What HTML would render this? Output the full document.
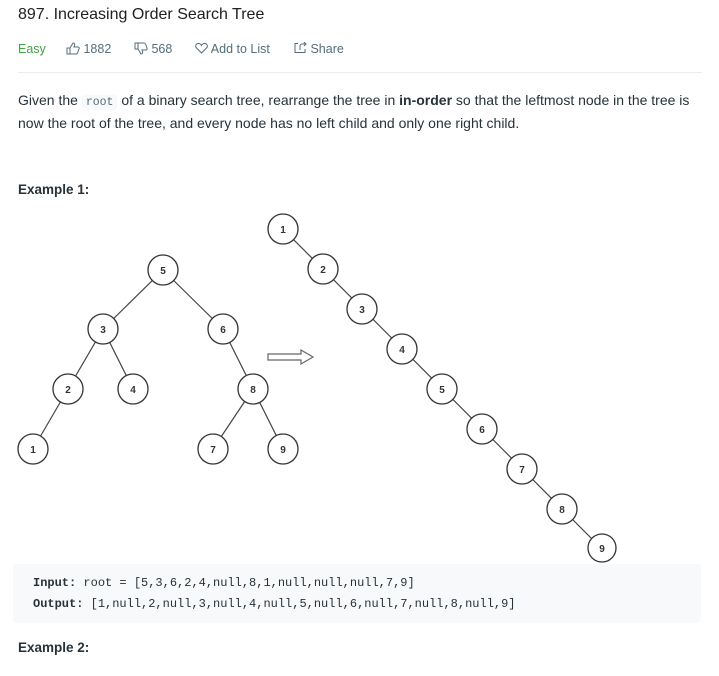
<!DOCTYPE html>
<html><head><meta charset="utf-8"><style>
body{margin:0;background:#fff;font-family:"Liberation Sans",sans-serif;color:#263238;width:719px;height:676px;overflow:hidden;position:relative}
.a{position:absolute}
.t{left:18px;top:6px;font-size:16px;font-weight:500;color:#212121}
.m{top:42px;font-size:12.5px;color:#546e7a}
.p{left:18px;top:90px;font-size:14px;line-height:21px;width:690px}
code{font-family:"Liberation Mono",monospace;font-size:11.5px;background:#f7f9fa;border-radius:3px;padding:1px 4px;color:#546e7a}
.h{left:18px;font-size:13.5px;font-weight:bold;color:#263238}
.pre{left:13px;top:564px;width:688px;height:59px;background:#f7f9fa;border-radius:3px;font-family:"Liberation Mono",monospace;font-size:12px;color:#263238}
</style></head><body>
<div class="a t">897. Increasing Order Search Tree</div>
<div class="a m" style="left:18px;color:#43a047;font-weight:500">Easy</div>
<div class="a m" style="left:66px">
<svg width="14" height="13" viewBox="0 0 14 13" style="vertical-align:-2px"><path d="M1 6h3v6H1zM4 6l3-5c1.5 0 2 1 1.5 2.5L8 5h4c1 0 1.5 1 1 2l-1.5 4c-.3.7-.8 1-1.5 1H4" fill="none" stroke="#546e7a"/></svg> 1882</div>
<div class="a m" style="left:134px">
<svg width="14" height="13" viewBox="0 0 14 13" style="vertical-align:-2px;transform:scaleY(-1)"><path d="M1 6h3v6H1zM4 6l3-5c1.5 0 2 1 1.5 2.5L8 5h4c1 0 1.5 1 1 2l-1.5 4c-.3.7-.8 1-1.5 1H4" fill="none" stroke="#546e7a"/></svg> 568</div>
<div class="a m" style="left:195px">
<svg width="13" height="12" viewBox="0 0 13 12" style="vertical-align:-1px"><path d="M6.5 11L1.5 6C0 4.5.5 1.5 3.5 1.5c1.5 0 2.5 1 3 2 .5-1 1.5-2 3-2 3 0 3.5 3 2 4.5z" fill="none" stroke="#546e7a"/></svg> Add to List</div>
<div class="a m" style="left:294px">
<svg width="13" height="12" viewBox="0 0 13 12" style="vertical-align:-1px"><path d="M4 1.5H1v9h10V7M6 8V4c0-1 1-2 2-2h4M10 0l2 2-2 2" fill="none" stroke="#546e7a"/></svg> Share</div>
<div class="a" style="left:18px;top:72px;width:684px;height:1px;background:#eceff1"></div>
<div class="a p">Given the <code>root</code> of a binary search tree, rearrange the tree in <b>in-order</b> so that the leftmost node in the tree is<br>now the root of the tree, and every node has no left child and only one right child.</div>
<div class="a h" style="top:182px">Example 1:</div>
<svg class="a" style="left:0;top:0" width="719" height="676">
<g stroke="#444" stroke-width="1.2" fill="none">
<path d="M163 270L103 329M163 270L223 329M103 329L68 389M103 329L133 389M223 329L253 389M68 389L33 449M253 389L213 449M253 389L283 449M283 229L602 549"/>
<path d="M268 354h33v-4l12 7-12 7v-4h-33z" stroke="#666"/>
</g>
<g fill="#fff" stroke="#333" stroke-width="1.3">
<circle cx="163" cy="270" r="15"/><circle cx="103" cy="329" r="15"/><circle cx="223" cy="329" r="15"/><circle cx="68" cy="389" r="15"/><circle cx="133" cy="389" r="15"/><circle cx="253" cy="389" r="15"/><circle cx="33" cy="449" r="15"/><circle cx="213" cy="449" r="15"/><circle cx="283" cy="449" r="15"/>
<circle cx="283" cy="229" r="15"/><circle cx="323" cy="269" r="15"/><circle cx="362" cy="309" r="15"/><circle cx="402" cy="349" r="15"/><circle cx="442" cy="389" r="15"/><circle cx="482" cy="429" r="15"/><circle cx="522" cy="469" r="15"/><circle cx="562" cy="509" r="15"/><circle cx="602" cy="548" r="14"/>
</g>
<g font-family="Liberation Sans" font-weight="bold" font-size="10" fill="#333" text-anchor="middle">
<text x="163" y="274">5</text><text x="103" y="333">3</text><text x="223" y="333">6</text><text x="68" y="393">2</text><text x="133" y="393">4</text><text x="253" y="393">8</text><text x="33" y="453">1</text><text x="213" y="453">7</text><text x="283" y="453">9</text>
<text x="283" y="233">1</text><text x="323" y="273">2</text><text x="362" y="313">3</text><text x="402" y="353">4</text><text x="442" y="393">5</text><text x="482" y="433">6</text><text x="522" y="473">7</text><text x="562" y="513">8</text><text x="602" y="552">9</text>
</g>
<circle cx="221" cy="692" r="15" fill="none" stroke="#333" stroke-width="1.3"/>
</svg>
<div class="a pre"><div style="position:absolute;left:20px;top:12px"><b>Input:</b> root = [5,3,6,2,4,null,8,1,null,null,null,7,9]</div><div style="position:absolute;left:20px;top:33px"><b>Output:</b> [1,null,2,null,3,null,4,null,5,null,6,null,7,null,8,null,9]</div></div>
<div class="a h" style="top:640px">Example 2:</div>
</body></html>
